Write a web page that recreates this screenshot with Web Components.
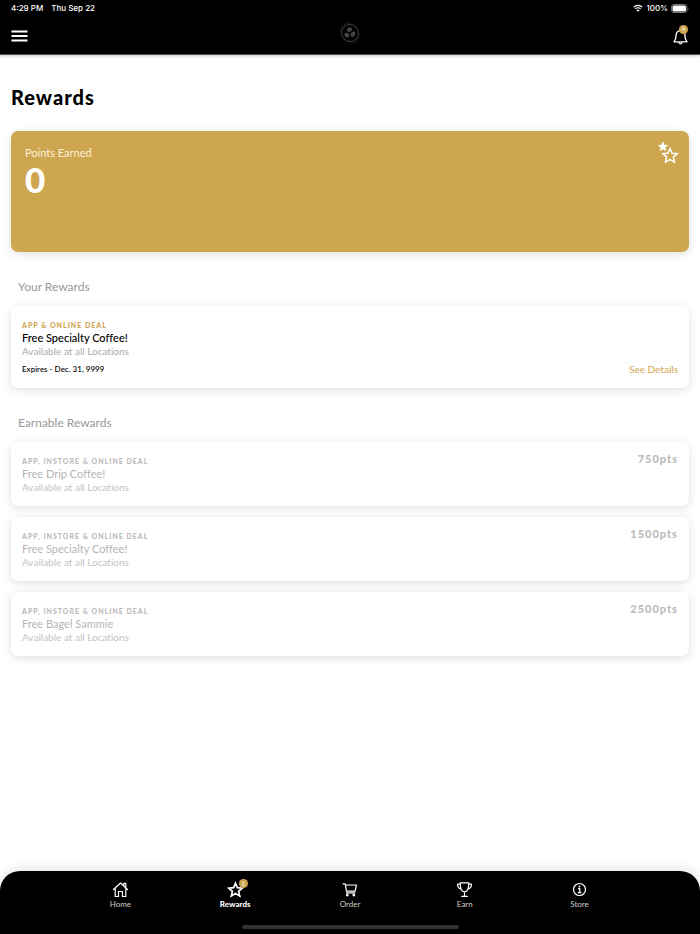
<!DOCTYPE html>
<html lang="en">
<head>
<meta charset="utf-8">
<meta name="viewport" content="width=device-width, initial-scale=1">
<title>Rewards</title>
<style>
  body {
    margin: 0;
    background: #fff;
    color: #000;
    font-family: Lato, "Open Sans", sans-serif;
    font-variant-ligatures: none;
    --gold: #cfa650;
    --shadow: 0 2px 10px rgba(0, 0, 0, 0.13);
  }
</style>
</head>
<body>
<rewards-app></rewards-app>

<script>
// status-bar.js
customElements.define('status-bar',
  class extends HTMLElement {
    constructor() {
      super();
      this.attachShadow({ mode: 'open' });
      this.shadowRoot.innerHTML = `
        <style>
          :host {
            display: flex;
            justify-content: space-between;
            align-items: center;
            height: 16px;
            padding: 0 11px;
            background: #000;
            color: #fff;
            font: 500 8px/16px Inter, sans-serif;
          }
          div { display: flex; align-items: center; gap: 8px; }
          .right { gap: 3px; }
          svg { display: block; }
        </style>
        <div><span>4:29 PM</span><span>Thu Sep 22</span></div>
        <div class="right">
          <svg width="10" height="8" viewBox="0 0 20 16" fill="none" stroke="#fff" stroke-width="2.6">
            <path d="M1.5 6.2a12 12 0 0 1 17 0M4.8 9.8a7.4 7.4 0 0 1 10.4 0"/>
            <path d="M10 15.5l-3-3.2a4.2 4.2 0 0 1 6 0z" fill="#fff" stroke="none"/>
          </svg>
          <span>100%</span>
          <svg width="18" height="9" viewBox="0 0 18 9">
            <rect x=".5" y=".5" width="15.5" height="8" rx="2.4" fill="none" stroke="#777"/>
            <rect x="1.5" y="1.5" width="13.5" height="6" rx="1.5" fill="#fff"/>
            <path d="M17 3.2q1 1.3 0 2.6z" fill="#777"/>
          </svg>
        </div>
      `;
    }
  }
);

// count-badge.js
customElements.define('count-badge',
  class extends HTMLElement {
    constructor() {
      super();
      this.attachShadow({ mode: 'open' });
      this.shadowRoot.innerHTML = `
        <style>
          :host {
            display: block;
            width: 9px;
            height: 9px;
            border-radius: 50%;
            background: var(--gold);
            color: #fff;
            font-size: 6px;
            font-weight: 400;
            line-height: 9px;
            text-align: center;
          }
        </style>
        <slot></slot>
      `;
    }
  }
);

// app-header.js
customElements.define('app-header',
  class extends HTMLElement {
    constructor() {
      super();
      this.attachShadow({ mode: 'open' });
      this.shadowRoot.innerHTML = `
        <style>
          :host {
            display: grid;
            grid-template-columns: 1fr auto 1fr;
            align-items: center;
            box-sizing: border-box;
            height: 39px;
            padding: 2px 11px 0;
            background: #000;
            border-bottom: 1px solid #555;
            box-shadow: 0 1px 3px rgba(0, 0, 0, 0.25);
          }
          button {
            position: relative;
            display: block;
            padding: 0;
            border: 0;
            background: none;
            cursor: pointer;
          }
          .bell { justify-self: end; }
          svg { display: block; }
          .logo { margin-bottom: 6px; }
          count-badge { position: absolute; top: -2px; right: 1px; }
        </style>
        <button type="button" aria-label="Menu">
          <svg width="17" height="12" viewBox="0 0 17 12" stroke="#fff" stroke-width="2">
            <path d="M.5 1.5h16M.5 6h16M.5 10.5h16"/>
          </svg>
        </button>
        <svg class="logo" width="22" height="22" viewBox="0 0 22 22" fill="none" stroke="#424242">
          <circle cx="11" cy="11" r="8.5"/>
          <path d="M1 9A10.3 10.3 0 0 1 12 1M21 13A10.3 10.3 0 0 1 10 21.3" stroke-width="1.4" stroke-dasharray="1 1.6" opacity=".7"/>
          <g fill="#4c4c4c" stroke="none">
            <ellipse cx="10.5" cy="7.7" rx="2.7" ry="2.1" transform="rotate(-25 10.5 7.7)"/>
            <ellipse cx="7.9" cy="13" rx="2.5" ry="2.1" transform="rotate(30 7.9 13)"/>
            <ellipse cx="14" cy="12.2" rx="2.1" ry="2.8" transform="rotate(30 14 12.2)"/>
          </g>
          <path d="M8.8 8.5l3.4-1.6M6.5 12l2.8 2M13.2 14l1.6-3.6" stroke="#222" stroke-width=".4"/>
        </svg>
        <button class="bell" type="button" aria-label="Notifications">
          <svg width="17" height="19" viewBox="0 0 17 19" fill="none" stroke="#fff" stroke-width="1.3" stroke-linejoin="round">
            <path d="M2 14.8c1.6-1.8 2-3 2-6 0-3 1.7-5 4.500-5s4.500 2 4.500 5c0 3 .4 4.200 2 6z"/>
            <path d="M6.7 15.300q1.800 3 3.600 0"/>
          </svg>
          <count-badge>4</count-badge>
        </button>
      `;
    }
  }
);

// points-card.js
customElements.define('points-card',
  class extends HTMLElement {
    constructor() {
      super();
      this.attachShadow({ mode: 'open' });
      this.shadowRoot.innerHTML = `
        <style>
          :host {
            display: flex;
            justify-content: space-between;
            align-items: flex-start;
            box-sizing: border-box;
            min-height: 121px;
            padding: 10px 10px 10px 14px;
            border-radius: 7px;
            background: var(--gold);
            box-shadow: var(--shadow);
            color: #fff;
          }
          .label {
            margin: 4px 0 0;
            color: #fbf0d8;
            font-size: 11px;
            line-height: 16px;
          }
          .value {
            margin: 0;
            font-size: 35px;
            font-weight: 900;
            line-height: 36px;
          }
          svg { display: block; }
        </style>
        <div>
          <p class="label">Points Earned</p>
          <p class="value"><slot></slot></p>
        </div>
        <svg width="21" height="23" viewBox="0 0 21 23" fill="none" stroke="#fff" stroke-width="1.5">
          <path d="M5 .3l1.5 3.4 3.7.4-2.800 2.400.8 3.700L5 8.300l-3.200 1.900.8-3.700L-.2 4.100l3.700-.4z" fill="#fff" stroke="none"/>
          <path d="M12 7.500l2.100 4.700 5.100.5-3.800 3.400 1.100 5-4.500-2.600-4.500 2.600 1.100-5-3.800-3.400 5.100-.5z"/>
        </svg>
      `;
    }
  }
);

// reward-card.js
customElements.define('reward-card',
  class extends HTMLElement {
    constructor() {
      super();
      this.attachShadow({ mode: 'open' });
      this.shadowRoot.innerHTML = `
        <style>
          :host {
            display: flex;
            flex-direction: column;
            gap: 3px;
            box-sizing: border-box;
            min-height: 64px;
            padding: 11px;
            border-radius: 7px;
            background: #fff;
            box-shadow: var(--shadow);
          }
          .top, .bottom {
            display: flex;
            justify-content: space-between;
            align-items: flex-start;
          }
          .deal, h3, .where { margin: 0; }
          .deal {
            padding-top: 3px;
            color: var(--gold);
            font-size: 7px;
            font-weight: 900;
            line-height: 10px;
            letter-spacing: 1px;
          }
          h3 {
            font-size: 11px;
            font-weight: 500;
            line-height: 15px;
          }
          .where {
            color: #aaa;
            font-size: 10px;
            line-height: 13px;
          }
          :host([locked]) .deal { color: #bbb; }
          :host([locked]) h3 { color: #b5b5b5; font-weight: 400; }
          :host([locked]) .where { color: #c4c4c4; }
          :host([locked]) .bottom { display: none; }
          ::slotted([slot="points"]) {
            color: #bbb;
            font-size: 11px;
            font-weight: 900;
            line-height: 12px;
            letter-spacing: 1px;
          }
          ::slotted([slot="expires"]) {
            font-size: 8px;
            font-weight: 500;
            line-height: 16px;
          }
          ::slotted(a) {
            color: var(--gold);
            font-size: 10px;
            line-height: 16px;
            text-decoration: none;
          }
        </style>
        <div class="top">
          <div>
            <p class="deal"><slot name="deal"></slot></p>
            <h3><slot></slot></h3>
            <p class="where">Available at all Locations</p>
          </div>
          <slot name="points"></slot>
        </div>
        <div class="bottom">
          <slot name="expires"></slot>
          <slot name="link"></slot>
        </div>
      `;
    }
  }
);

// nav-item.js
customElements.define('nav-item',
  class extends HTMLElement {
    constructor() {
      super();
      this.attachShadow({ mode: 'open' });
      this.shadowRoot.innerHTML = `
        <style>
          :host { display: block; flex: 1; }
          a {
            display: flex;
            flex-direction: column;
            align-items: center;
            gap: 1px;
            color: #ccc;
            font-size: 8px;
            line-height: 10px;
            text-decoration: none;
          }
          :host([active]) a { color: #fff; font-weight: 900; }
          .icon { position: relative; }
          .icon ::slotted(svg) { display: block; }
          ::slotted(count-badge) {
            position: absolute;
            top: -2px;
            right: -4px;
          }
        </style>
        <a href="#">
          <span class="icon"><slot name="icon"></slot><slot name="badge"></slot></span>
          <span><slot></slot></span>
        </a>
      `;
    }
  }
);

// tab-bar.js
customElements.define('tab-bar',
  class extends HTMLElement {
    constructor() {
      super();
      this.attachShadow({ mode: 'open' });
      this.shadowRoot.innerHTML = `
        <style>
          :host {
            display: flex;
            flex-direction: column;
            justify-content: space-between;
            align-items: center;
            box-sizing: border-box;
            height: 63px;
            padding: 10px 0 5px;
            border-radius: 20px 20px 0 0;
            background: #000;
            box-shadow: 0 -2px 12px rgba(0, 0, 0, 0.12);
          }
          nav { display: flex; width: 82%; }
          .grip {
            width: 31%;
            height: 4px;
            border-radius: 2px;
            background: #333;
          }
        </style>
        <nav>
          <nav-item>
            <svg slot="icon" width="17" height="17" viewBox="0 0 17 17" fill="none" stroke="#fff" stroke-width="1.2" stroke-linejoin="round" stroke-linecap="round">
              <path d="M1.5 8.5l7-6.500 7 6.500M3.200 7.500v8h3.300v-5h4v5h3.300v-8M11.800 4.500V2.300h2v4"/>
            </svg>
            Home
          </nav-item>
          <nav-item active>
            <svg slot="icon" width="17" height="17" viewBox="0 0 17 17" fill="none" stroke="#fff" stroke-width="1.7">
              <path d="M8.5 2.3l1.900 4.400 4.800.4-3.600 3.200 1.100 4.700-4.200-2.500L4.300 15l1.100-4.700-3.600-3.200 4.800-.4z"/>
            </svg>
            <count-badge slot="badge">1</count-badge>
            Rewards
          </nav-item>
          <nav-item>
            <svg slot="icon" width="17" height="17" viewBox="0 0 17 17" fill="none" stroke="#fff" stroke-width="1.2" stroke-linejoin="round" stroke-linecap="round">
              <path d="M2 2.8h2.200l1.600 9h8M4.500 4h11l-1.400 6H5.500"/>
              <path d="M5.800 10.700h7.800" stroke="#bbb" stroke-width="1.6"/>
              <circle cx="6.3" cy="14" r=".8" fill="#fff"/>
              <circle cx="12.8" cy="14" r=".8" fill="#fff"/>
            </svg>
            Order
          </nav-item>
          <nav-item>
            <svg slot="icon" width="17" height="17" viewBox="0 0 17 17" fill="none" stroke="#fff" stroke-width="1.2" stroke-linejoin="round" stroke-linecap="round">
              <path d="M4.2 1.8h8.600c0 5-1.100 9-4.300 9s-4.300-4-4.300-9zM4.200 3.200H1.500c0 3 1.200 4.300 3.500 4.800M12.800 3.200h2.700c0 3-1.200 4.300-3.500 4.800M8.500 10.800v4.400M5.700 15.400h5.600"/>
            </svg>
            Earn
          </nav-item>
          <nav-item>
            <svg slot="icon" width="17" height="17" viewBox="0 0 17 17" fill="none" stroke="#fff" stroke-width="1.2">
              <circle cx="8.5" cy="8.5" r="6"/>
              <path d="M7 7.500h1.700v4M6.800 11.700h3.600" stroke-width="1.3"/>
              <circle cx="8.5" cy="5.3" r=".9" fill="#fff" stroke="none"/>
            </svg>
            Store
          </nav-item>
        </nav>
        <div class="grip"></div>
      `;
    }
  }
);

// rewards-app.js
customElements.define('rewards-app',
  class extends HTMLElement {
    constructor() {
      super();
      this.attachShadow({ mode: 'open' });
      this.shadowRoot.innerHTML = `
        <style>
          :host {
            display: flex;
            flex-direction: column;
            min-height: 100vh;
          }
          main { flex: 1; padding: 28px 11px 20px; }
          h1 {
            margin: 0 0 20px;
            font-size: 20px;
            font-weight: 900;
            line-height: 28px;
            letter-spacing: 1px;
          }
          h2 {
            margin: 25px 7px 9px;
            color: #999;
            font-size: 12px;
            font-weight: 400;
            line-height: 20px;
          }
          .list { display: grid; gap: 11px; }
          tab-bar { position: sticky; bottom: 0; }
        </style>
        <status-bar></status-bar>
        <app-header></app-header>
        <main>
          <h1>Rewards</h1>
          <points-card>0</points-card>
          <h2>Your Rewards</h2>
          <div class="list">
            <reward-card>
              <span slot="deal">APP &amp; ONLINE DEAL</span>
              Free Specialty Coffee!
              <span slot="expires">Expires - Dec. 31, 9999</span>
              <a slot="link" href="#">See Details</a>
            </reward-card>
          </div>
          <h2>Earnable Rewards</h2>
          <div class="list" id="earnable"></div>
        </main>
        <tab-bar></tab-bar>
      `;

      this.renderEarnable([
        { name: 'Free Drip Coffee!', points: 750 },
        { name: 'Free Specialty Coffee!', points: 1500 },
        { name: 'Free Bagel Sammie', points: 2500 },
      ]);
    }

    // Add one locked card for each reward
    renderEarnable(rewards) {
      const list = this.shadowRoot.getElementById('earnable');
      rewards.forEach((reward) => {
        const card = document.createElement('reward-card');
        card.setAttribute('locked', '');
        card.innerHTML = `
          <span slot="deal">APP, INSTORE &amp; ONLINE DEAL</span>
          ${reward.name}
          <span slot="points">${reward.points}pts</span>
        `;
        list.appendChild(card);
      });
    }
  }
);
</script>
</body>
</html>
